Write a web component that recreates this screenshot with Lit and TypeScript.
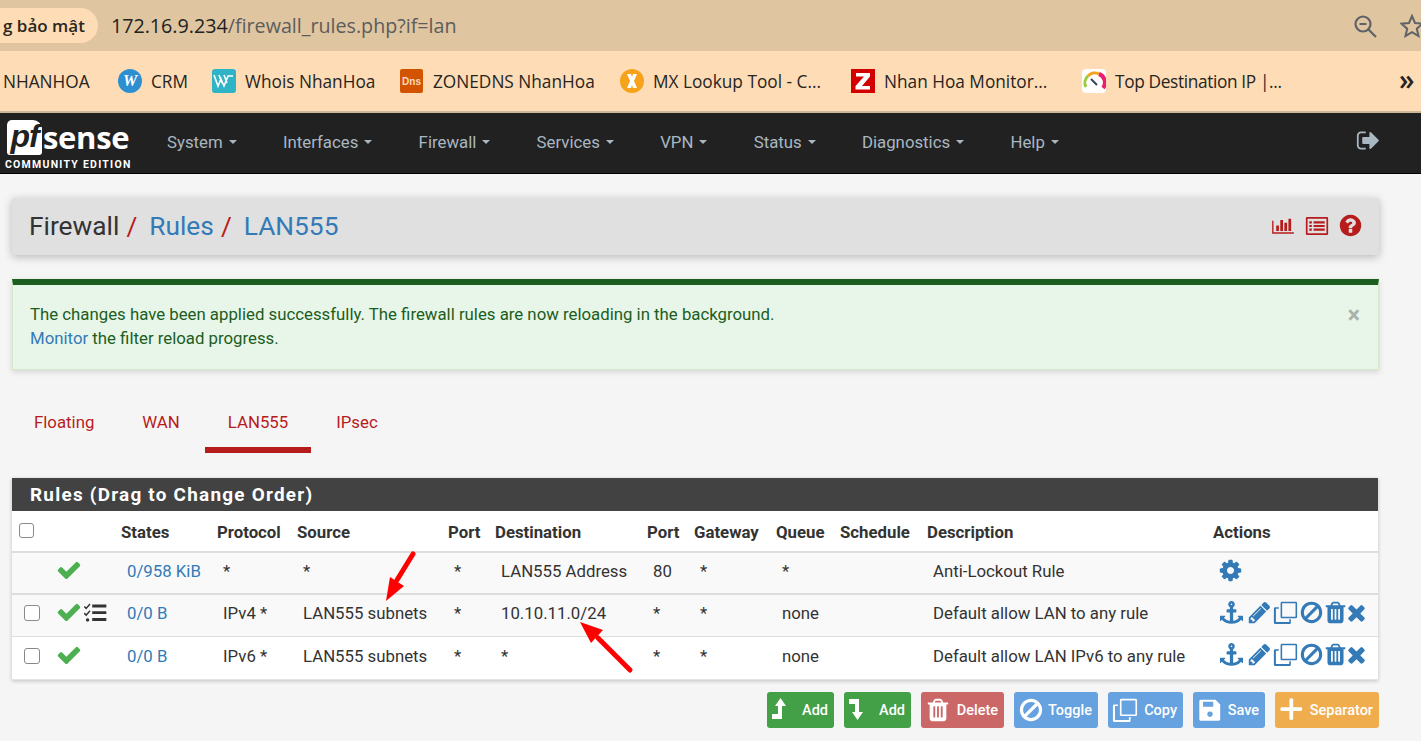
import { LitElement, html, css } from "lit"
import { customElement } from "lit/decorators.js"

// font-awesome 4 glyph paths, viewBox 1792 unless noted
const P = {
  check: "M1671 566q0 40-28 68l-724 724-136 136q-28 28-68 28t-68-28l-136-136-362-362q-28-28-28-68t28-68l136-136q28-28 68-28t68 28l294 295 656-657q28-28 68-28t68 28l136 136q28 28 28 68z",
  times: "M1490 1322q0 40-28 68l-136 136q-28 28-68 28t-68-28l-294-294-294 294q-28 28-68 28t-68-28l-136-136q-28-28-28-68t28-68l294-294-294-294q-28-28-28-68t28-68l136-136q28-28 68-28t68 28l294 294 294-294q28-28 68-28t68 28l136 136q28 28 28 68t-28 68l-294 294 294 294q28 28 28 68z",
  ban: "M1440 893q0-161-87-295l-754 753q137 89 297 89 111 0 211.5-43.5t173.5-116.5 116-174.5 43-212.5zm-999 299l755-754q-135-91-300-91-148 0-273 73t-198 199-73 274q0 162 89 299zm1223-299q0 157-61 300t-163.5 246-245 164-298.5 61-298.5-61-245-164-163.5-246-61-300 61-299.5 163.5-245.5 245-164 298.5-61 298.5 61 245 164 163.5 245.5 61 299.5z",
  trash: "M704 1376v-704q0-14-9-23t-23-9h-64q-14 0-23 9t-9 23v704q0 14 9 23t23 9h64q14 0 23-9t9-23zm256 0v-704q0-14-9-23t-23-9h-64q-14 0-23 9t-9 23v704q0 14 9 23t23 9h64q14 0 23-9t9-23zm256 0v-704q0-14-9-23t-23-9h-64q-14 0-23 9t-9 23v704q0 14 9 23t23 9h64q14 0 23-9t9-23zm-544-992h448l-48-117q-7-9-17-11h-317q-10 2-17 11zm928 32v64q0 14-9 23t-23 9h-96v948q0 83-47 143.5t-113 60.5h-832q-66 0-113-58.5t-47-141.5v-952h-96q-14 0-23-9t-9-23v-64q0-14 9-23t23-9h309l70-167q15-37 54-63t79-26h320q40 0 79 26t54 63l70 167h309q14 0 23 9t9 23z",
  pencil: "M491 1536l91-91-235-235-91 91v107h128v128h107zm523-928q0-22-22-22-10 0-17 7l-542 542q-7 7-7 17 0 22 22 22 10 0 17-7l542-542q7-7 7-17zm-54-192l416 416-832 832h-416v-416zm683 96q0 53-37 90l-166 166-416-416 166-165q36-38 90-38 53 0 91 38l235 234q37 39 37 91z",
  cog: "M1152 896q0-106-75-181t-181-75-181 75-75 181 75 181 181 75 181-75 75-181zm512-109v222q0 12-8 23t-20 13l-185 28q-19 54-39 91 35 50 107 138 10 12 10 25t-9 23q-27 37-99 108t-94 71q-12 0-26-9l-138-108q-44 23-91 38-16 136-29 186-7 28-36 28h-222q-14 0-24.5-8.5t-11.5-21.5l-28-184q-49-16-90-37l-141 107q-10 9-25 9-14 0-25-11-126-114-165-168-7-10-7-23 0-12 8-23 15-21 51-66.5t54-70.5q-27-50-41-99l-183-27q-13-2-21-12.5t-8-23.5v-222q0-12 8-23t19-13l186-28q14-46 39-92-40-57-107-138-10-12-10-24 0-10 9-23 26-36 98.5-107.5t94.5-71.5q13 0 26 10l138 107q44-23 91-38 16-136 29-186 7-28 36-28h222q14 0 24.5 8.5t11.5 21.5l28 184q49 16 90 37l142-107q9-9 24-9 13 0 25 10 129 119 165 170 7 8 7 22 0 12-8 23-15 21-51 66.5t-54 70.5q26 50 41 98l183 28q13 2 21 12.5t8 23.5z",
  anchor: "M960 256q0-26-19-45t-45-19-45 19-19 45 19 45 45 19 45-19 19-45zm832 928v352q0 22-20 30-8 2-12 2-12 0-23-9l-93-93q-119 143-318.5 226.5t-429.5 83.5-429.5-83.5-318.5-226.5l-93 93q-9 9-23 9-4 0-12-2-20-8-20-30v-352q0-14 9-23t23-9h352q22 0 30 20 8 19-7 35l-100 100q67 91 189.5 153.5t271.5 82.5v-647h-192q-26 0-45-19t-19-45v-128q0-26 19-45t45-19h192v-163q-58-34-93-92.5t-35-128.5q0-106 75-181t181-75 181 75 75 181q0 70-35 128.5t-93 92.5v163h192q26 0 45 19t19 45v128q0 26-19 45t-45 19h-192v647q149-20 271.5-82.5t189.5-153.5l-100-100q-15-16-7-35 8-20 30-20h352q14 0 23 9t9 23z",
  question: "M1024 1376v-192q0-14-9-23t-23-9h-192q-14 0-23 9t-9 23v192q0 14 9 23t23 9h192q14 0 23-9t9-23zm256-672q0-88-55.5-163t-138.5-116-170-41q-243 0-371 213-15 24 8 42l132 100q7 6 19 6 16 0 25-12 53-68 86-92 34-24 86-24 48 0 85.5 26t37.5 59q0 38-20 61t-68 45q-63 28-115.5 86.5t-52.5 125.5v36q0 14 9 23t23 9h192q14 0 23-9t9-23q0-19 21.5-49.5t54.5-49.5q32-18 49-28.5t46-35 44.5-48 28-60.5 12.5-81zm384 192q0 209-103 385.5t-279.5 279.5-385.5 103-385.5-103-279.5-279.5-103-385.5 103-385.5 279.5-279.5 385.5-103 385.5 103 279.5 279.5 103 385.5z",
  signout: "M704 1440q0 4 1 20t.5 26.5-3 23.5-10 19.5-20.5 6.5h-320q-119 0-203.5-84.5t-84.5-203.5v-704q0-119 84.5-203.5t203.5-84.5h320q13 0 22.5 9.5t9.5 22.5q0 4 1 20t.5 26.5-3 23.5-10 19.5-20.5 6.5h-320q-66 0-113 47t-47 113v704q0 66 47 113t113 47h312l11.5 1 11.5 3 8 5.5 7 9 2 13.5zm928-544q0 26-19 45l-544 544q-19 19-45 19t-45-19-19-45v-288h-448q-26 0-45-19t-19-45v-384q0-26 19-45t45-19h448v-288q0-26 19-45t45-19 45 19l544 544q19 19 19 45z",
  plus: "M1600 800v64q0 40-28 68t-68 28h-528v528q0 40-28 68t-68 28h-64q-40 0-68-28t-28-68v-528h-528q-40 0-68-28t-28-68v-64q0-40 28-68t68-28h528v-528q0-40 28-68t68-28h64q40 0 68 28t28 68v528h528q40 0 68 28t28 68z",
  clone: "M640 128h992a96 96 0 0 1 96 96v992a96 96 0 0 1-96 96h-992a96 96 0 0 1-96-96v-992a96 96 0 0 1 96-96zm16 112v960h960v-960zM160 512h256v112h-208v960h960v-208h112v256a96 96 0 0 1-96 96h-1024a96 96 0 0 1-96-96v-1024a96 96 0 0 1 96-96z",
  save: "M256 192h1024l320 320v1024a96 96 0 0 1-96 96h-1248a96 96 0 0 1-96-96v-1248a96 96 0 0 1 96-96zm160 128v352h704v-352zm480 672a192 192 0 1 0 .1 0z",
  tasks: "M60 380l110 110 260-290 80 80-340 380-190-190zM640 270h1100v230h-1100zM60 900l110 110 260-290 80 80-340 380-190-190zM640 790h1100v230h-1100zM280 1340a130 130 0 1 1-.1 0zM640 1330h1100v230h-1100z",
  listalt: "M160 224h1472a96 96 0 0 1 96 96v1152a96 96 0 0 1-96 96h-1472a96 96 0 0 1-96-96v-1152a96 96 0 0 1 96-96zm32 128v1088h1408v-1088zM320 544h192v160h-192zM640 544h832v160h-832zM320 816h192v160h-192zM640 816h832v160h-832zM320 1088h192v160h-192zM640 1088h832v160h-832z",
}
const BAR_CHART = "M640 896v512h-256v-512h256zm384-512v1024h-256v-1024h256zm1024 1152v128h-2048v-1216h128v1088h1920zm-640-896v768h-256v-768h256zm384-384v1152h-256v-1152h256z"
// tall narrow level-up / level-down arrows of the button row
const LEVEL_UP = "M9.500 1L15 9H11V22H1V17H7V9H4Z"
const LEVEL_DOWN = "M1 2H11V15H15L9.500 23L4 15H7V7H1Z"

const icon = (d: string, cls: string, vb = "0 0 1792 1792") =>
  html`<svg class=${cls} viewBox=${vb} fill-rule="evenodd" fill="currentColor"><path d=${d}></path></svg>`

const menu = ["System", "Interfaces", "Firewall", "Services", "VPN", "Status", "Diagnostics", "Help"]
const heads = ["States", "Protocol", "Source", "Port", "Destination", "Port", "Gateway", "Queue", "Schedule", "Description", "Actions"]
const widths = [40, 69, 96, 80, 151, 47, 152, 47, 82, 64, 87, 286, 165]

const rows = [
  { box: false, tasks: false, cells: ["*", "*", "*", "LAN555 Address", "80", "*", "*", "", "Anti-Lockout Rule"], states: "0/958 KiB", fixed: true },
  { box: true, tasks: true, cells: ["IPv4 *", "LAN555 subnets", "*", "10.10.11.0/24", "*", "*", "none", "", "Default allow LAN to any rule"], states: "0/0 B", fixed: false },
  { box: true, tasks: false, cells: ["IPv6 *", "LAN555 subnets", "*", "*", "*", "*", "none", "", "Default allow LAN IPv6 to any rule"], states: "0/0 B", fixed: false },
]

@customElement("app-root")
export class AppRoot extends LitElement {
  static styles = css`
    :host {
      display: block;
      position: relative;
      width: 1421px;
      height: 741px;
      overflow: hidden;
      background: #f5f5f5;
      color: #333;
      font-family: Roboto, sans-serif;
      font-size: 16.8px;
    }

    /* browser chrome */
    .addr {
      height: 51px;
      background: #dfc5a0;
      display: flex;
      align-items: center;
      box-sizing: border-box;
      font-family: "Open Sans", sans-serif;
    }
    .pill {
      margin-left: -27px;
      padding: 0 13px 0 30px;
      height: 35px;
      border-radius: 18px;
      background: #fedcb5;
      color: #2c2620;
      font-size: 17px;
      font-weight: 600;
      line-height: 35px;
      white-space: nowrap;
    }
    .url {
      margin-left: 13px;
      font-size: 19.7px;
      color: #5c5c5c;
    }
    .url b {
      font-weight: 400;
      color: #222;
    }
    .addr-right {
      margin-left: auto;
      display: flex;
      align-items: center;
      gap: 23px;
      margin-right: -3px;
      color: #5f6368;
    }
    .marks {
      height: 62px;
      box-sizing: border-box;
      background: #fedcb5;
      border-bottom: 2px solid #cdb898;
      display: grid;
      grid-template-columns: 115px 94px 188px 220px 231px 231px 317px 30px;
      align-items: center;
      padding-left: 3px;
      font-family: "Open Sans", sans-serif;
      font-size: 17.25px;
      color: #26241f;
    }
    .mark {
      display: flex;
      align-items: center;
      gap: 9px;
      white-space: nowrap;
    }
    .mark.tight {
      letter-spacing: -0.35px;
    }
    .fav {
      width: 24px;
      height: 24px;
      flex: none;
      display: block;
    }
    .more {
      font-size: 28px;
      font-weight: 600;
      line-height: 1;
      margin-top: -5px;
    }

    /* pfsense navbar */
    .nav {
      height: 61px;
      box-sizing: border-box;
      background: #212121;
      border-bottom: 1px solid #000;
      display: flex;
      align-items: center;
      color: #a9b7c1;
      position: relative;
    }
    .logo {
      width: 167px;
      flex: none;
      padding: 6px 0 0 5px;
      box-sizing: border-box;
      color: #fff;
      align-self: flex-start;
    }
    .logo-top {
      display: flex;
      align-items: center;
      margin-left: 2px;
      height: 36px;
    }
    .pf {
      width: 35px;
      height: 35px;
      box-sizing: border-box;
      background: #fff;
      color: #212121;
      border-radius: 5px 9px 3px 3px;
      font: italic 700 32px/33px "Liberation Sans", sans-serif;
      letter-spacing: -1px;
      text-align: center;
    }
    .sense {
      font: 700 31px/36px "Open Sans", sans-serif;
      letter-spacing: -0.3px;
      margin-left: 1px;
    }
    .edition {
      font: 700 10.5px/12px Roboto, sans-serif;
      letter-spacing: 1.25px;
      margin-top: 4px;
      white-space: nowrap;
    }
    .menu {
      display: flex;
      gap: 46.3px;
      margin-top: -3px;
    }
    .menu span {
      display: flex;
      align-items: center;
      gap: 6px;
    }
    .menu i {
      width: 0;
      height: 0;
      border: 4px solid transparent;
      border-top-color: #a9b7c1;
      border-bottom: 0;
      margin-top: 1px;
    }
    .out {
      margin-left: auto;
      margin-right: 40px;
      margin-top: -6px;
      display: flex;
    }
    .i-out {
      width: 25px;
      height: 25px;
    }

    /* page */
    .page {
      padding: 24px 42px 0 12px;
    }
    .crumb {
      height: 57px;
      box-sizing: border-box;
      background: #e0e0e0;
      border-radius: 2px;
      box-shadow: 0 2px 8px rgba(0, 0, 0, 0.25);
      display: flex;
      align-items: center;
      padding: 0 18px 2px 17px;
      font-size: 26.3px;
      color: #333;
    }
    .crumb em {
      font-style: normal;
      color: #b71c1c;
      margin: 0 12px 0 7px;
    }
    .crumb a {
      color: #337ab7;
    }
    .crumb-icons {
      margin-left: auto;
      margin-right: -2px;
      display: flex;
      align-items: center;
      gap: 9px;
      color: #b71c1c;
    }
    .i-chart {
      width: 22px;
      height: 19px;
      margin-right: 2px;
    }
    .i-list {
      width: 24px;
      height: 24px;
    }
    .i-help {
      width: 25px;
      height: 25px;
    }
    .alert {
      margin-top: 24px;
      height: 91px;
      box-sizing: border-box;
      background: #e8f5e9;
      border-top: 6px solid #1b5e20;
      border-left: 1px solid #d6e9c6;
      border-right: 1px solid #d6e9c6;
      border-bottom: 1px solid #d6e9c6;
      box-shadow: 0 2px 6px rgba(0, 0, 0, 0.14);
      padding: 17px 18px 0 17px;
      color: #1b5e20;
      line-height: 24px;
      display: flex;
      justify-content: space-between;
    }
    .alert a {
      color: #337ab7;
    }
    .close {
      font-size: 23px;
      font-weight: 700;
      color: #a9b2aa;
      margin: 2px 0 0 0;
    }
    .tabs {
      display: flex;
      gap: 2px;
      margin: 40px 0 0 -1px;
      color: #b71c1c;
      line-height: 24px;
    }
    .tab {
      padding: 0 23px 13px;
      border-bottom: 6px solid transparent;
    }
    .tab.on {
      border-bottom-color: #b71c1c;
    }
    .panel {
      margin: 25px 1px 0 0;
      background: #fff;
      box-shadow: 0 1px 4px rgba(0, 0, 0, 0.22);
    }
    .head {
      height: 33px;
      box-sizing: border-box;
      background: #424242;
      color: #fff;
      font-size: 18.9px;
      font-weight: 700;
      letter-spacing: 1.25px;
      line-height: 33px;
      padding-left: 18px;
      white-space: nowrap;
    }
    table {
      border-collapse: collapse;
      table-layout: fixed;
      width: 1366px;
    }
    th {
      height: 39px;
      padding: 1px 0 0;
      text-align: left;
      font-weight: 700;
      border-bottom: 2px solid #ddd;
      color: #333;
      white-space: nowrap;
    }
    td {
      height: 36px;
      padding: 0 0 4px 6px;
      border-bottom: 2px solid #ddd;
      white-space: nowrap;
    }
    tr.odd td {
      background: #f9f9f9;
    }
    tr.thin td {
      border-bottom: 1px solid #ddd;
      height: 36px;
      padding-bottom: 5px;
    }
    tr.last td {
      border-bottom: 1px solid #e4e4e4;
      height: 37px;
      padding-bottom: 5px;
    }
    td a {
      color: #337ab7;
    }
    .th-box {
      padding-left: 7px;
    }
    .th-box .box {
      width: 14.5px;
      height: 14.5px;
      margin-top: -2px;
    }
    .td-box {
      padding-left: 12px;
    }
    .box {
      display: block;
      width: 16px;
      height: 16px;
      box-sizing: border-box;
      border: 1.5px solid #8a8a8a;
      border-radius: 3px;
      background: #fff;
    }
    .status {
      display: flex;
      align-items: center;
      margin: -2px 0 0 -2px;
    }
    .i-check {
      width: 26px;
      height: 26px;
      color: #4caf50;
    }
    .i-tasks {
      width: 23px;
      height: 23px;
      color: #333;
      margin-left: 2px;
    }
    .acts {
      display: flex;
      align-items: center;
      color: #337ab7;
      margin: -1px 0 0 1px;
    }
    .thin .acts,
    .last .acts {
      margin-top: -2px;
    }
    .acts svg {
      width: 25px;
      height: 25px;
      flex: none;
    }
    .acts svg.a-anchor {
      width: 23px;
      height: 23px;
    }
    .acts svg.a-pencil {
      margin-left: 3.5px;
    }
    .acts svg.a-clone,
    .acts svg.a-ban {
      margin-left: 1px;
    }
    .acts svg.a-trash {
      margin-left: -1px;
    }
    .acts svg.a-times {
      margin-left: -3.5px;
    }
    .acts svg.a-gear {
      margin-left: -2px;
    }
    .btns {
      display: flex;
      justify-content: flex-end;
      gap: 10px;
      margin-top: 12px;
    }
    .btn {
      height: 36px;
      box-sizing: border-box;
      display: flex;
      align-items: center;
      justify-content: space-between;
      padding: 0 6px 0 4px;
      border-radius: 3px;
      color: #fff;
      font-size: 14.5px;
      font-weight: 500;
    }
    .btn svg {
      width: 26px;
      height: 26px;
      flex: none;
    }
    .green {
      background: #43a047;
    }
    .red {
      background: #cb6767;
    }
    .blue {
      background: #65a2df;
    }
    .orange {
      background: #f0ad4e;
    }
    .w67 {
      width: 67px;
    }
    .w83 {
      width: 83px;
    }
    .w84 {
      width: 84px;
    }
    .w75 {
      width: 75px;
    }
    .w72 {
      width: 72px;
    }
    .w104 {
      width: 104px;
    }

    /* red annotations drawn over the screenshot */
    .marks-over {
      position: absolute;
      left: 0;
      top: 0;
      width: 1421px;
      height: 741px;
      pointer-events: none;
    }
  `

  favicons() {
    return {
      crm: html`<svg class="fav" viewBox="0 0 24 24"><circle cx="12" cy="12" r="12" fill="#2d8fd0"/><text x="12" y="17" text-anchor="middle" font-family="Liberation Serif" font-style="italic" font-weight="700" font-size="16" fill="#fff">W</text></svg>`,
      whois: html`<svg class="fav" viewBox="0 0 24 24"><rect width="24" height="24" rx="3" fill="#2fb3c6"/><path d="M2 6l4 11 3-7 3 7 4-10h5M7 6l3 8M12 6l3 8" fill="none" stroke="#fff" stroke-width="1.600"/></svg>`,
      dns: html`<svg class="fav" viewBox="0 0 24 24"><rect width="23" height="24" rx="2" fill="#d35400"/><text x="11.5" y="16" text-anchor="middle" font-family="Liberation Sans" font-weight="700" font-size="10" fill="#fbd9bf">Dns</text></svg>`,
      mx: html`<svg class="fav" viewBox="0 0 24 24"><circle cx="12" cy="12" r="12" fill="#f7a21b"/><path d="M7 5h4l1 3 1-3h4l-3 7 3 7h-4l-1-3-1 3H7l3-7z" fill="#fff"/></svg>`,
      z: html`<svg class="fav" viewBox="0 0 24 24"><rect width="24" height="24" fill="#d40000"/><path d="M5 4h14v3.500L11 17h8v3.500H4.500V17L13 7.500H5z" fill="#fff"/></svg>`,
      gauge: html`<svg class="fav" viewBox="0 0 24 24"><rect width="24" height="24" rx="4" fill="#fff"/><path d="M4 18A9 9 0 0 1 6 7" fill="none" stroke="#9ccc3c" stroke-width="3"/><path d="M6 7A9 9 0 0 1 17 5" fill="none" stroke="#f7a21b" stroke-width="3"/><path d="M17 5A9 9 0 0 1 21 19" fill="none" stroke="#ec1d6e" stroke-width="4"/><path d="M9 10l6 6" stroke="#33415c" stroke-width="2"/></svg>`,
    }
  }

  renderActions(fixed: boolean) {
    if (fixed) return html`<div class="acts">${icon(P.cog, "a-gear")}</div>`
    return html`<div class="acts">
      ${icon(P.anchor, "a-anchor")}${icon(P.pencil, "a-pencil")}${icon(P.clone, "a-clone")}${icon(P.ban, "a-ban")}${icon(P.trash, "a-trash")}${icon(P.times, "a-times")}
    </div>`
  }

  render() {
    const f = this.favicons()
    return html`
      <div class="addr">
        <div class="pill">g bảo mật</div>
        <div class="url"><b>172.16.9.234</b>/firewall_rules.php?if=lan</div>
        <div class="addr-right">
          <svg width="24" height="24" viewBox="0 0 24 24" fill="none" stroke="currentColor" stroke-width="2.200">
            <circle cx="10" cy="10" r="7.500"/><path d="M15.500 15.500L23 23M6.500 10h7"/>
          </svg>
          <svg width="24" height="24" viewBox="0 0 24 24" fill="none" stroke="currentColor" stroke-width="2">
            <path d="M12 2l3 7 7.500.7-5.700 5 1.700 7.300-6.500-3.900L5.500 22l1.700-7.300-5.700-5L9 9z"/>
          </svg>
        </div>
      </div>
      <div class="marks">
        <div class="mark">NHANHOA</div>
        <div class="mark">${f.crm}CRM</div>
        <div class="mark">${f.whois}Whois NhanHoa</div>
        <div class="mark">${f.dns}ZONEDNS NhanHoa</div>
        <div class="mark">${f.mx}MX Lookup Tool - C...</div>
        <div class="mark">${f.z}Nhan Hoa Monitor...</div>
        <div class="mark tight">${f.gauge}Top Destination IP |...</div>
        <div class="more">»</div>
      </div>
      <div class="nav">
        <div class="logo">
          <div class="logo-top"><div class="pf">pf</div><div class="sense">sense</div></div>
          <div class="edition">COMMUNITY EDITION</div>
        </div>
        <div class="menu">${menu.map((m) => html`<span>${m}<i></i></span>`)}</div>
        <div class="out">${icon(P.signout, "i-out")}</div>
      </div>
      <div class="page">
        <div class="crumb">
          <span>Firewall</span><em>/</em><a>Rules</a><em>/</em><a>LAN555</a>
          <div class="crumb-icons">
            ${icon(BAR_CHART, "i-chart", "0 0 2048 1792")} ${icon(P.listalt, "i-list")} ${icon(P.question, "i-help")}
          </div>
        </div>
        <div class="alert">
          <div>
            The changes have been applied successfully. The firewall rules are now reloading in the background.<br />
            <a>Monitor</a> the filter reload progress.
          </div>
          <div class="close">×</div>
        </div>
        <div class="tabs">
          <div class="tab">Floating</div>
          <div class="tab">WAN</div>
          <div class="tab on">LAN555</div>
          <div class="tab">IPsec</div>
        </div>
        <div class="panel">
          <div class="head">Rules (Drag to Change Order)</div>
          <table>
            <colgroup>${widths.map((w) => html`<col style="width:${w}px" />`)}</colgroup>
            <tr>
              <th class="th-box"><span class="box"></span></th>
              <th></th>
              ${heads.map((h) => html`<th>${h}</th>`)}
            </tr>
            ${rows.map(
              (r, i) => html`
                <tr class="${i < 2 ? "odd" : ""} ${i === 1 ? "thin" : ""} ${i === 2 ? "last" : ""}">
                  <td class="td-box">${r.box ? html`<span class="box"></span>` : ""}</td>
                  <td>
                    <div class="status">${icon(P.check, "i-check")}${r.tasks ? icon(P.tasks, "i-tasks") : ""}</div>
                  </td>
                  <td><a>${r.states}</a></td>
                  ${r.cells.map((c) => html`<td>${c}</td>`)}
                  <td>${this.renderActions(r.fixed)}</td>
                </tr>
              `
            )}
          </table>
        </div>
        <div class="btns">
          <div class="btn green w67">${icon(LEVEL_UP, "", "0 0 26 26")}Add</div>
          <div class="btn green w67">${icon(LEVEL_DOWN, "", "0 0 26 26")}Add</div>
          <div class="btn red w83">${icon(P.trash, "")}Delete</div>
          <div class="btn blue w84">${icon(P.ban, "")}Toggle</div>
          <div class="btn blue w75">${icon(P.clone, "")}Copy</div>
          <div class="btn blue w72">${icon(P.save, "")}Save</div>
          <div class="btn orange w104">${icon(P.plus, "")}Separator</div>
        </div>
      </div>
      <svg class="marks-over" viewBox="0 0 1421 741">
        <path d="M413 554L397 580" stroke="#f00" stroke-width="5" stroke-linecap="round"/>
        <path d="M386 601L390 577 404 586z" fill="#f00"/>
        <path d="M630 670L598 638" stroke="#f00" stroke-width="5" stroke-linecap="round"/>
        <path d="M580 622L603 630 591 643z" fill="#f00"/>
      </svg>
    `
  }
}
